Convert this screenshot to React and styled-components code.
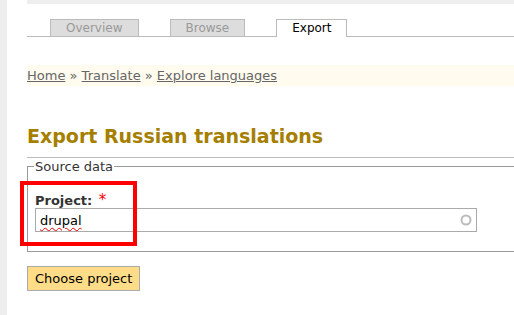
import styled, { createGlobalStyle } from 'styled-components'

const GlobalStyle = createGlobalStyle`
html, body {
   margin: 0;
   padding: 0;
   background: #fff;
   overflow: hidden;
}
body {
   font-family: "DejaVu Sans", Verdana, sans-serif;
   font-size: 13px;
   color: #000;
}
`

const Page = styled.div`
position: relative;
display: flex;
width: 514px;
height: 315px;
overflow: hidden;
`

const Strip = styled.div`
width: 7px;
flex-shrink: 0;
background: #eee;
`

const Main = styled.div`
flex-shrink: 0;
width: 580px;
margin-left: 20px;
display: flex;
flex-direction: column;
`

const TopBar = styled.div`
height: 4px;
background: #eee;
`

const Tabs = styled.ul`
list-style: none;
margin: 15px 0 0;
padding: 0 0 0 23px;
display: flex;
align-items: flex-end;
gap: 31px;
border-bottom: 1px solid #bbb;
font-size: 12px;
`

const Tab = styled.li`
line-height: 16px;
padding: 0 15px;
border: 1px solid #bbb;
border-bottom: 0;
background: ${props => props.active ? '#fff' : '#ddd'};
color: ${props => props.active ? '#000' : '#999'};
margin-bottom: ${props => props.active ? '-1px' : '0'};
height: ${props => props.active ? '17px' : '16px'};
`

const Breadcrumb = styled.div`
margin-top: 28px;
height: 21px;
line-height: 21px;
background: #fffcef;
color: #666;
`

const Crumb = styled.a`
color: #666;
text-decoration: underline;
`

const Heading = styled.h2`
margin: 39px 0 0;
padding-bottom: 10px;
font-size: 19px;
font-weight: bold;
line-height: 22px;
color: #a57f00;
border-bottom: 1px solid #bbb;
`

const Fieldset = styled.fieldset`
margin: 1px 0 0;
padding: 0 7px 19px;
border: 1px solid #999;
border-right: 0;
`

const Legend = styled.legend`
padding: 0 1px;
margin-left: -1px;
color: #333;
line-height: 15px;
`

const Label = styled.label`
display: block;
margin-top: 19px;
font-weight: bold;
color: #333;
line-height: 15px;
`

const Required = styled.span`
color: #f00;
font-size: 15px;
font-weight: normal;
margin-left: 2px;
`

const Input = styled.div`
height: 22px;
width: 432px;
padding: 0 4px;
border: 1px solid #aaa;
display: flex;
align-items: center;
`

const Misspelled = styled.span`
text-decoration: underline wavy #e00;
text-decoration-thickness: 1px;
text-underline-offset: 2px;
`

const Throbber = styled.svg`
margin-left: auto;
`

const Button = styled.button`
align-self: flex-start;
margin-top: 14px;
height: 25px;
padding: 0 7px;
font-family: inherit;
font-size: 13px;
color: #000;
background: #ffdd88;
border: 1px solid #aaa;
border-radius: 0;
`

const Highlight = styled.div`
position: absolute;
left: 20px;
top: 181px;
width: 109px;
height: 57px;
border: 4px solid #f00;
pointer-events: none;
`

export default function App() {
   return (
      <>
         <GlobalStyle />
         <Page>
            <Strip />
            <Main>
               <TopBar />
               <Tabs>
                  <Tab>Overview</Tab>
                  <Tab>Browse</Tab>
                  <Tab active>Export</Tab>
               </Tabs>
               <Breadcrumb>
                  <Crumb>Home</Crumb> » <Crumb>Translate</Crumb> » <Crumb>Explore languages</Crumb>
               </Breadcrumb>
               <Heading>Export Russian translations</Heading>
               <Fieldset>
                  <Legend>Source data</Legend>
                  <Label>Project: <Required>*</Required></Label>
                  <Input>
                     <Misspelled>drupal</Misspelled>
                     <Throbber width="12" height="12" viewBox="0 0 12 12">
                        <circle cx="6" cy="6" r="4.5" fill="none" stroke="#bbb" strokeWidth="2" />
                     </Throbber>
                  </Input>
               </Fieldset>
               <Button>Choose project</Button>
            </Main>
            <Highlight />
         </Page>
      </>
   )
}
